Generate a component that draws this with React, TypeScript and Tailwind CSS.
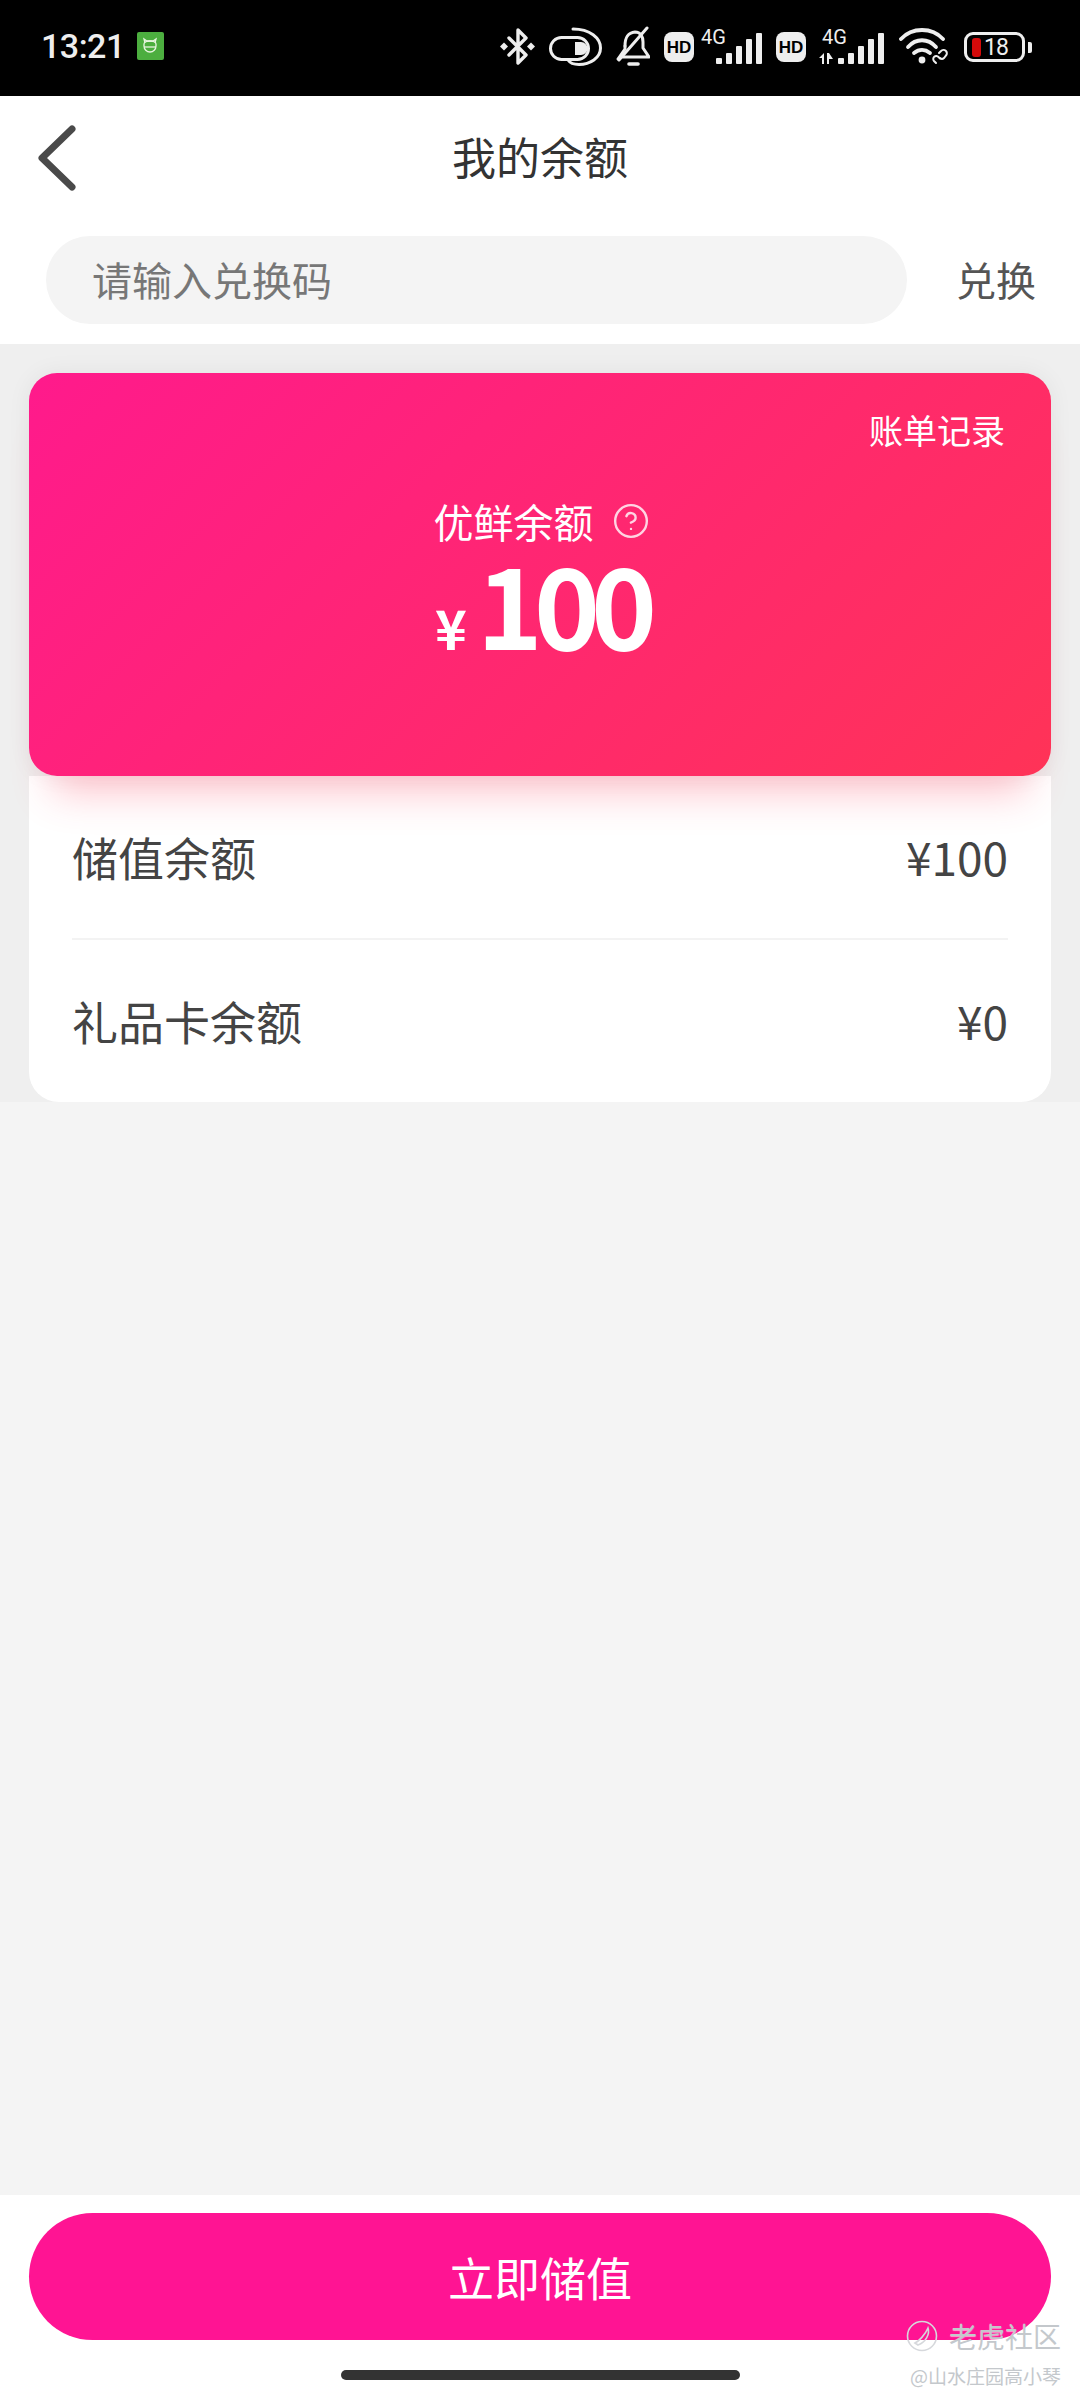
import { HelpCircle } from "lucide-react";

function Bluetooth() {
  return (
    <svg width="35" height="39" viewBox="0 0 35 39" fill="none" stroke="#eee" strokeWidth="3.4" strokeLinejoin="round" strokeLinecap="round">
      <path d="M9 11 L26 28 L18 36 V3 L26 11 L9 28" />
      <path d="M4 15.5 L8 19.5 L4 23.5 L0 19.5 Z M31 15.5 L35 19.5 L31 23.5 L27 19.5 Z" fill="#eee" stroke="none" />
    </svg>
  );
}

function ToggleArc() {
  return (
    <svg width="53" height="39" viewBox="0 0 53 39" fill="none" stroke="#eee" strokeWidth="3" strokeLinecap="round">
      <rect x="1.5" y="10.5" width="38" height="22" rx="11" />
      <path d="M26 15 H32 A6.5 6.5 0 0 1 32 28 H26 Z" fill="#eee" stroke="none" />
      <path d="M24 2 C41 2 51.5 11 51.5 21 C51.5 31 41 37.5 30 37.5 C25 37.5 21 36 19 33" />
    </svg>
  );
}

function BellOff() {
  return (
    <svg width="34" height="40" viewBox="0 0 34 40" fill="none" stroke="#eee" strokeWidth="3" strokeLinecap="round" strokeLinejoin="round">
      <path d="M9 20 C9 12 11 7 19 6 C25 6 27 11 27 16 V22 L33 31 H7" />
      <path d="M9 20 V23 L2 33" />
      <path d="M3 34 L31 2" />
      <path d="M13 38 H22" strokeWidth="3.6" />
    </svg>
  );
}

function HdBadge() {
  return (
    <span className="mt-[2px] flex h-[30px] w-[30px] items-center justify-center rounded-[8px] bg-[#eeeeee] font-['Liberation_Sans',sans-serif] text-[17px] leading-none font-bold text-black">
      HD
    </span>
  );
}

function Signal({ arrows = false }: { arrows?: boolean }) {
  const x0 = arrows ? 19 : 15;
  const width = arrows ? 66 : 63;
  const heights = [6, 11, 18, 25, 31];
  return (
    <svg width={width} height="45" viewBox={`0 0 ${width} 45`} fill="#eee">
      <text x={arrows ? 3 : 0} y="20" fontSize="20" fontFamily="Roboto, sans-serif">
        4G
      </text>
      {heights.map((h, i) => (
        <rect key={i} x={x0 + i * 10} y={40 - h} width="6" height={h} rx="1" />
      ))}
      {arrows && <path d="M5 29 V40 H3 V34 L0 34 Z M8 29 H10 L14 35 H10 V40 H8 Z" />}
    </svg>
  );
}

function WifiLink() {
  return (
    <svg width="50" height="39" viewBox="0 0 50 39" fill="none" stroke="#eee" strokeWidth="3.8" strokeLinecap="round">
      <path d="M2 12 C13 0 33 0 44 12" />
      <path d="M9 20 C17 11 29 11 37 20" />
      <path d="M15 26 C20 22 26 22 31 26" />
      <circle cx="23" cy="33" r="3.4" fill="#eee" stroke="none" />
      <g strokeWidth="2">
        <path d="M37 36 L35 34 A3 3 0 0 1 39.5 30 L41 31.5" />
        <path d="M40 26 L42 24 A3 3 0 0 1 47 28.5 L45 31 A3 3 0 0 1 41 31" />
      </g>
    </svg>
  );
}

function Battery() {
  return (
    <div className="mt-[2px] flex items-center gap-[3px]">
      <div className="flex h-[30px] w-[61px] items-center rounded-[9px] border-[3px] border-[#eeeeee] pl-[5px]">
        <span className="h-[19px] w-[9px] rounded-[3px] bg-[#d40a0a]" />
        <span className="ml-[3px] font-['Roboto',sans-serif] text-[23px] leading-none tracking-[-1px] text-[#eeeeee]">18</span>
      </div>
      <span className="h-[11px] w-[4px] rounded-r-[2px] bg-[#eeeeee]" />
    </div>
  );
}

function StatusBar() {
  return (
    <div className="flex h-[96px] shrink-0 items-center justify-between bg-black pb-[4px] pl-[41px] pr-[48px]">
      <div className="flex items-center gap-[12px]">
        <span className="font-['Roboto',sans-serif] text-[34px] leading-none font-medium tracking-[-0.5px] text-[#eeeeee]">13:21</span>
        <span className="flex h-[28px] w-[27px] items-center justify-center rounded-[2px] bg-[#4cae3f]">
          <svg width="16" height="18" viewBox="0 0 16 18" fill="none" stroke="#e8f5e0" strokeWidth="1.3">
            <path d="M3 6 L2 2 L5 4 H11 L14 2 L13 6" />
            <path d="M2 9 A6 6 0 0 0 14 9 V7 A6 3 0 0 0 2 7 Z" />
            <path d="M2 10 H14" />
          </svg>
        </span>
      </div>
      <div className="flex items-center">
        <Bluetooth />
        <span className="ml-[14px]"><ToggleArc /></span>
        <span className="ml-[14px]"><BellOff /></span>
        <span className="ml-[14px]"><HdBadge /></span>
        <span className="ml-[7px]"><Signal /></span>
        <span className="ml-[12px]"><HdBadge /></span>
        <span className="ml-[13px]"><Signal arrows /></span>
        <span className="ml-[14px]"><WifiLink /></span>
        <span className="ml-[15px]"><Battery /></span>
      </div>
    </div>
  );
}

function Header() {
  return (
    <div className="shrink-0 bg-white">
      <div className="relative flex h-[124px] items-center justify-center pb-[4px]">
        <svg className="absolute left-[36px] top-[29px]" width="42" height="66" viewBox="0 0 42 66" fill="none" stroke="#4a4a4a" strokeWidth="7" strokeLinecap="round" strokeLinejoin="round">
          <path d="M36 4 L6 33 L36 62" />
        </svg>
        <h1 className="text-[44px] leading-none font-normal text-[#333333]">我的余额</h1>
      </div>
      <div className="flex items-start pb-[20px] pl-[46px] pr-[44px] pt-[16px]">
        <div className="flex h-[88px] w-[861px] items-center rounded-full bg-[#f4f4f4] pb-[3px] pl-[46px] text-[40px] leading-none text-[#777777]">
          请输入兑换码
        </div>
        <span className="ml-auto flex h-[88px] items-center pb-[3px] text-[40px] leading-none text-[#555555]">兑换</span>
      </div>
    </div>
  );
}

function BalanceCard() {
  return (
    <div className="relative z-10 h-[403px] rounded-[28px] bg-linear-135/srgb from-[#ff1a8c] to-[#ff3357] pr-[46px] pt-[37px] text-white shadow-[0_40px_40px_-24px_rgba(255,60,90,0.3),0_0_24px_rgba(0,0,0,0.06)]">
      <p className="text-right text-[34px] leading-[40px]">账单记录</p>
      <div className="ml-[46px] mt-[47px] flex flex-col items-center">
        <div className="flex items-center gap-[18px] pl-[3px]">
          <span className="text-[40px] leading-[48px]">优鲜余额</span>
          <HelpCircle size={38} strokeWidth={1.5} className="text-white/80" />
        </div>
        <div className="flex items-baseline gap-[10px] pl-[3px]">
          <span className="text-[54px] leading-none font-bold">¥</span>
          <span className="text-[112px] leading-[112px] font-bold tracking-[-9px]">100</span>
        </div>
      </div>
    </div>
  );
}

function BalanceRow({ label, value }: { label: string; value: string }) {
  return (
    <div className="flex h-[162px] items-center justify-between pb-[3px] text-[46px] leading-none text-[#444444]">
      <span>{label}</span>
      <span>{value}</span>
    </div>
  );
}

export default function App() {
  return (
    <div className="relative flex h-[2400px] w-[1080px] flex-col overflow-hidden bg-[#f4f4f4] font-['Noto_Sans_CJK_SC','Liberation_Sans',sans-serif]">
      <StatusBar />
      <Header />
      <section className="shrink-0 bg-[#efefef] px-[29px] pt-[29px]">
        <BalanceCard />
        <div className="rounded-b-[30px] bg-white px-[43px]">
          <BalanceRow label="储值余额" value="¥100" />
          <div className="h-[2px] bg-[#f3f3f3]" />
          <BalanceRow label="礼品卡余额" value="¥0" />
        </div>
      </section>
      <div className="flex-1" />
      <footer className="relative h-[205px] shrink-0 bg-white px-[29px] pt-[18px]">
        <button className="h-[127px] w-full rounded-full bg-[#ff1493] pb-[2px] text-[46px] leading-none text-white">立即储值</button>
        <div className="mx-auto mt-[30px] h-[10px] w-[399px] rounded-full bg-[#333333]" />
      </footer>
      <div className="absolute right-[19px] top-[2320px] flex flex-col items-end text-[#c4c8cc] [text-shadow:0_1px_1px_rgba(255,255,255,0.6)]">
        <div className="flex items-center gap-[11px]">
          <svg width="32" height="32" viewBox="0 0 32 32" fill="none" stroke="#d6d8dc" strokeWidth="1.6">
            <circle cx="16" cy="16" r="14.5" />
            <path d="M9 23 C13 21 19 15 22 8 C24 14 20 22 12 25 Z" />
          </svg>
          <span className="text-[28px] leading-[32px]">老虎社区</span>
        </div>
        <span className="mt-[13px] text-[19px] leading-[22px]">@山水庄园高小琴</span>
      </div>
    </div>
  );
}
